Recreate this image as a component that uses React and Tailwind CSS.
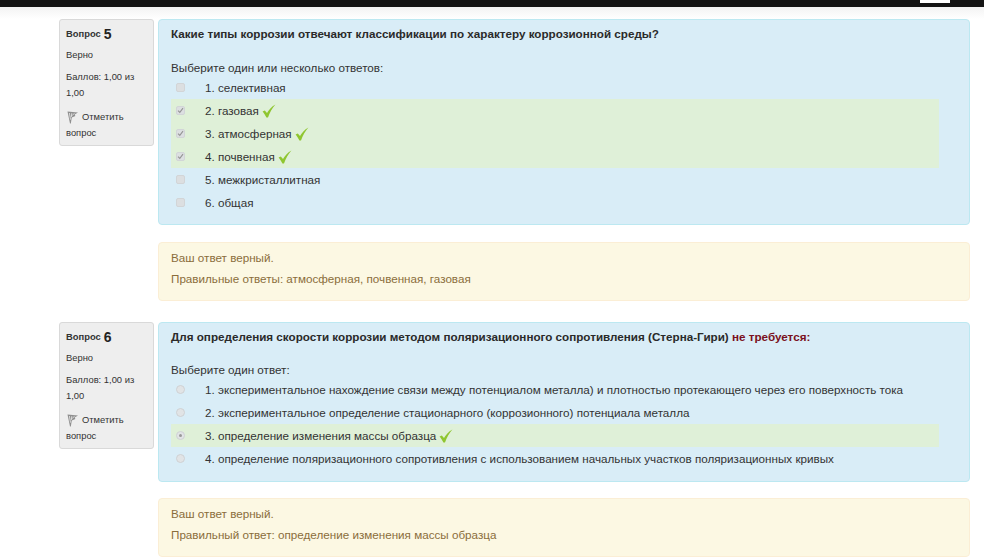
const Check = () => (
  <svg width="14" height="14" viewBox="0 0 14 14" className="inline-block ml-[3px] align-[-3px]">
    <path d="M0.6 7.4 L2.8 6.4 L5 9 C6.8 5.8 9.4 2.6 13.4 0.4 C10.4 3.8 7.8 8 6 13.6 L4.4 13.6 C3.4 11.2 2.2 9.2 0.6 7.4 Z" fill="#8fc630" />
  </svg>
);

const Flag = () => (
  <svg width="12" height="13" viewBox="0 0 12 13" className="shrink-0">
    <path d="M0.5 0.6 L11 1.4 L7.6 3.6 L8.4 5 L4.8 6.4 L3.8 12.6 L3 12.6 Z" fill="#8f8f8f" />
    <path d="M2.4 2 L3.5 8.6 M4.8 2.2 L4.3 6 M7.4 2.2 L5.2 4.6" stroke="#eeeeee" strokeWidth="0.8" fill="none" />
  </svg>
);

const Box = ({ checked, radio }) =>
  radio ? (
    <span className="w-[9px] h-[9px] rounded-full border border-[#cfd2d4] bg-[#e1e4e6] flex items-center justify-center shrink-0">
      {checked && <span className="w-[3px] h-[3px] rounded-full bg-[#999999]" />}
    </span>
  ) : (
    <span className="w-[9px] h-[9px] rounded-[2px] border border-[#d2d5d7] bg-[#dcdfe1] flex items-center justify-center shrink-0">
      {checked && (
        <svg width="7" height="7" viewBox="0 0 7 7">
          <path d="M1 3.6 L2.8 5.4 L6 1.2" stroke="#959595" strokeWidth="1.1" fill="none" />
        </svg>
      )}
    </span>
  );

const Row = ({ text, correct, checked, radio }) => (
  <div className={`flex items-center h-[23px] ${correct ? "bg-[#dff0d8]" : ""}`}>
    <span className="w-[34px] pl-[5px] flex shrink-0">
      <Box checked={checked} radio={radio} />
    </span>
    <span className="whitespace-nowrap">
      {text}
      {correct && <Check />}
    </span>
  </div>
);

const Info = ({ n, className }) => (
  <div className={`w-[95px] shrink-0 bg-[#eeeeee] border border-[#d9d9d9] rounded-[3px] pl-[6px] pr-[4px] pt-[5px] text-[9.4px] leading-[18px] text-[#333] ${className}`}>
    <div className="h-[18px] flex items-center">
      <span className="font-bold text-[#333]">Вопрос</span>
      <span className="font-bold text-[14px] ml-[3px] text-[#222]">{n}</span>
    </div>
    <div className="mt-[3px]">Верно</div>
    <div className="mt-[5px] leading-[16px]">Баллов: 1,00 из<br />1,00</div>
    <div className="mt-[8px] leading-[16px]">
      <div className="flex items-center gap-[3px] pl-[1px]">
        <Flag />
        <span>Отметить</span>
      </div>
      <div>вопрос</div>
    </div>
  </div>
);

const Question = ({ n, title, prompt, rows, radio, h, outcome, className, gap, promptGap }) => (
  <div className={`flex gap-[4px] items-start ${className}`}>
    <Info n={n} className="h-[127px]" />
    <div className="w-[812px]">
      <div className={`bg-[#d9edf7] border border-[#bce8f1] rounded-[4px] pl-[12px] pr-[30px] pt-[5px] ${h}`}>
        <div className="font-bold text-[#2a2a2a] leading-[18px] whitespace-nowrap">{title}</div>
        <div className={`${promptGap} leading-[16px]`}>{prompt}</div>
        <div>
          {rows.map((r) => (
            <Row key={r.text} {...r} radio={radio} />
          ))}
        </div>
      </div>
      <div className={`${gap} h-[59px] bg-[#fcf8e3] border border-[#fbeed5] rounded-[4px] pl-[12px] pt-[4px] text-[#8a6d3b] leading-[21px]`}>
        <div>Ваш ответ верный.</div>
        <div>{outcome}</div>
      </div>
    </div>
  </div>
);

export default function App() {
  return (
    <div className="w-[984px] h-[557px] overflow-hidden bg-white text-[11.66px] text-[#333] font-['Liberation_Sans',Arial,sans-serif]">
      <div className="relative h-[7px] bg-[#141414]">
        <div className="absolute left-[920px] top-0 w-[30px] h-[3px] bg-white" />
      </div>
      <div className="h-[12px] bg-gradient-to-b from-[#f3f3f3] to-white" />
      <div className="pl-[59px]">
        <Question
          n="5"
          h="h-[206px]"
          gap="mt-[17px]"
          promptGap="mt-[17px]"
          title="Какие типы коррозии отвечают классификации по характеру коррозионной среды?"
          prompt="Выберите один или несколько ответов:"
          outcome="Правильные ответы: атмосферная, почвенная, газовая"
          rows={[
            { text: "1. селективная" },
            { text: "2. газовая", correct: true, checked: true },
            { text: "3. атмосферная", correct: true, checked: true },
            { text: "4. почвенная", correct: true, checked: true },
            { text: "5. межкристаллитная" },
            { text: "6. общая" },
          ]}
        />
        <Question
          n="6"
          radio
          className="mt-[21px]"
          h="h-[160px]"
          gap="mt-[16px]"
          promptGap="mt-[16px]"
          title={
            <>
              Для определения скорости коррозии методом поляризационного сопротивления (Стерна-Гири){" "}
              <span className="text-[#7a1020]">не требуется:</span>
            </>
          }
          prompt="Выберите один ответ:"
          outcome="Правильный ответ: определение изменения массы образца"
          rows={[
            { text: "1. экспериментальное нахождение связи между потенциалом металла) и плотностью протекающего через его поверхность тока" },
            { text: "2. экспериментальное определение стационарного (коррозионного) потенциала металла" },
            { text: "3. определение изменения массы образца", correct: true, checked: true },
            { text: "4. определение поляризационного сопротивления с использованием начальных участков поляризационных кривых" },
          ]}
        />
      </div>
    </div>
  );
}
